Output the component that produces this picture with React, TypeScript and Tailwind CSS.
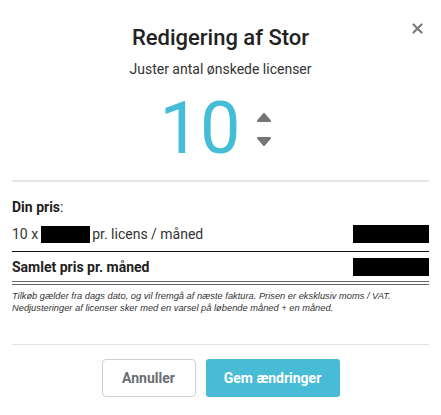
import React from "react";

function StepArrows() {
  return (
    <div className="flex flex-col items-center gap-[15px]">
      <svg width="16" height="10" viewBox="0 0 16 10">
        <path d="M2 9 L8 2 L14 9 Z" fill="#757575" stroke="#757575" strokeWidth="2" strokeLinejoin="round" />
      </svg>
      <svg width="16" height="10" viewBox="0 0 16 10">
        <path d="M2 1 L8 8 L14 1 Z" fill="#757575" stroke="#757575" strokeWidth="2" strokeLinejoin="round" />
      </svg>
    </div>
  );
}

export default function App() {
  return (
    <div
      className="relative w-[441px] h-[415px] bg-white text-[#333]"
      style={{ fontFamily: "Roboto, 'Liberation Sans', sans-serif" }}
    >
      <button className="absolute left-[412px] top-[23px] w-[11px] h-[11px]" aria-label="Luk">
        <svg width="11" height="11" viewBox="0 0 11 11">
          <path d="M1.5 1.5 L9.5 9.5 M9.5 1.5 L1.5 9.5" stroke="#7a7a7a" strokeWidth="2.2" strokeLinecap="round" />
        </svg>
      </button>

      <div className="pt-[24px] text-center">
        <h1 className="text-[22px] leading-[28px] font-medium text-[#222]">Redigering af Stor</h1>
        <p className="mt-[7px] text-[14px] leading-[20px] text-[#333]">Juster antal ønskede licenser</p>
      </div>

      <div className="mt-[14px] flex justify-center items-center gap-[16px] pr-[9px]">
        <span className="text-[72px] leading-[72px] font-normal text-[#45bdd7]">10</span>
        <StepArrows />
      </div>

      <div className="mx-[12px] mt-[15px] h-[2px] bg-[#e6e6e6]" />

      <div className="px-[12px]">
        <div className="mt-[15px] text-[14px] leading-[20px] text-[#222]">
          <span className="font-bold">Din pris</span>:
        </div>
        <div className="mt-[4px] flex items-center justify-between pt-[4px] pb-[8px] border-b border-[#111] text-[14px] leading-[18px]">
          <div className="flex items-center">
            <span>10 x</span>
            <span className="ml-[3px] mr-[2px] w-[49px] h-[17px] bg-black" />
            <span>pr. licens / måned</span>
          </div>
          <span className="w-[76px] h-[18px] bg-black" />
        </div>
        <div className="flex items-center justify-between pt-[6px] pb-[5px] border-b-[4px] border-double border-[#666] text-[14px] leading-[18px]">
          <span className="font-bold text-[#222]">Samlet pris pr. måned</span>
          <span className="w-[76px] h-[18px] bg-black" />
        </div>
        <p
          className="mt-[5px] text-[9.3px] leading-[12px] italic text-[#333]"
          style={{ fontFamily: "'Liberation Sans', Arial, sans-serif" }}
        >
          Tilkøb gælder fra dags dato, og vil fremgå af næste faktura. Prisen er eksklusiv moms / VAT.
          <br />
          Nedjusteringer af licenser sker med en varsel på løbende måned + en måned.
        </p>
      </div>

      <div className="mx-[12px] mt-[30px] h-px bg-[#e2e2e2]" />

      <div className="mt-[14px] flex justify-center gap-[10px]">
        <button className="w-[94px] h-[38px] rounded-[4px] border border-[#cfcfcf] bg-white text-[14px] font-bold text-[#6b6e73]">
          Annuller
        </button>
        <button className="w-[134px] h-[38px] rounded-[3px] bg-[#48bbd6] text-[14px] font-bold text-white">
          Gem ændringer
        </button>
      </div>
    </div>
  );
}
